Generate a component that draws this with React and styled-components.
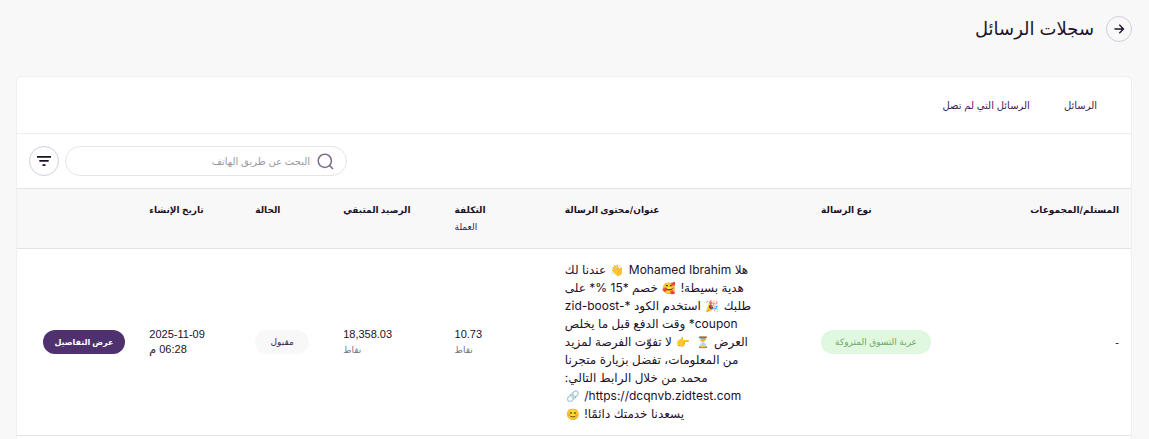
import React from 'react';
import styled, { createGlobalStyle } from 'styled-components';

const GlobalStyle = createGlobalStyle`
  * {
    box-sizing: border-box;
  }

  body {
    margin: 0;
    background: #f8f8f8;
    color: #1d1128;
    font-family: Inter, 'DejaVu Sans', sans-serif;
    font-size: 12px;
  }

  button,
  input {
    font-family: inherit;
  }
`;

const Page = styled.div`
  display: flex;
  flex-direction: column;
  min-height: 100vh;
  padding: 16px 17px 0 16px;
`;

const PageHeader = styled.header`
  display: flex;
  align-items: center;
  gap: 12px;
  height: 26px;
  margin-bottom: 34px;
`;

const Title = styled.h1`
  margin: 0;
  font-size: 18px;
  font-weight: 400;
  line-height: 22px;
`;

const RoundButton = styled.button`
  display: flex;
  align-items: center;
  justify-content: center;
  flex-shrink: 0;
  width: ${props => props.$size}px;
  height: ${props => props.$size}px;
  padding: 0;
  color: #1d1128;
  background: none;
  border: 1px solid #d3cedb;
  border-radius: 50%;
  cursor: pointer;
`;

const Card = styled.main`
  flex: 1;
  background: #fff;
  border: 1px solid #efeff0;
  border-bottom: 0;
  border-radius: 6px 6px 0 0;
`;

const Tabs = styled.nav`
  display: flex;
  align-items: center;
  gap: 34px;
  height: 57px;
  padding: 0 34px;
  border-bottom: 1px solid #efeff0;
`;

const Tab = styled.a`
  color: #3c1c54;
  font-size: 10px;
  line-height: 18px;
  text-decoration: none;
`;

const Toolbar = styled.div`
  display: flex;
  justify-content: flex-end;
  gap: 6px;
  padding: 12px;
`;

const SearchBox = styled.label`
  display: flex;
  align-items: center;
  gap: 7px;
  width: 282px;
  height: 30px;
  padding: 0 12px;
  color: #7d6c8d;
  border: 1px solid #e6e4ea;
  border-radius: 15px;
`;

const SearchInput = styled.input`
  flex: 1;
  min-width: 0;
  padding: 0;
  color: #1d1128;
  font-size: 10px;
  background: none;
  border: 0;
  outline: 0;

  &::placeholder {
    color: #9b9b9f;
    opacity: 1;
  }
`;

const Table = styled.table`
  width: 100%;
  table-layout: fixed;
  border-collapse: separate;
  border-spacing: 0;
`;

const Col = styled.col`
  width: ${props => props.$width};
`;

const HeadCell = styled.th`
  height: 61px;
  padding: 12px;
  font-size: 9px;
  font-weight: 600;
  line-height: 18px;
  text-align: ${props => props.$align || 'left'};
  vertical-align: top;
  white-space: nowrap;
  background: #f8f8f8;
  border-top: 1px solid #e3e3e5;
  border-bottom: 1px solid #e3e3e5;
`;

const Cell = styled.td`
  padding: 12px;
  line-height: 15px;
  text-align: ${props => props.$align || 'left'};
  vertical-align: middle;
  border-bottom: 1px solid #e3e3e5;
`;

const Figure = styled.div`
  font-family: 'Liberation Sans', 'DejaVu Sans', sans-serif;
  font-size: 11px;
  line-height: 15px;
`;

const SubText = styled.div`
  color: ${props => props.$color};
  font-size: 9px;
  font-weight: 400;
  line-height: 16px;
`;

const Message = styled.p`
  margin: 0;
  line-height: 18px;
  white-space: nowrap;
`;

const MessageLine = styled.span`
  display: block;
`;

const Emoji = styled.span`
  margin: 0 1px;
  font-size: 11px;
  line-height: 1;
  opacity: ${props => (props.$faded ? 0.6 : 1)};
`;

const Pill = styled.span`
  display: inline-block;
  min-width: 54px;
  padding: 0 14px;
  color: ${props => (props.$success ? '#6fa86f' : '#3c1c54')};
  font-size: 9px;
  line-height: 24px;
  text-align: center;
  vertical-align: middle;
  white-space: nowrap;
  background: ${props => (props.$success ? '#dff8df' : '#f8f8f8')};
  border-radius: 12px;
`;

const DetailsButton = styled.button`
  display: block;
  width: 82px;
  height: 24px;
  margin-right: auto;
  margin-left: 14px;
  padding: 0;
  color: #fff;
  font-size: 8px;
  font-weight: 600;
  white-space: nowrap;
  background: #4f3170;
  border: 0;
  border-radius: 12px;
  cursor: pointer;
`;

const ArrowIcon = () => (
  <svg width="12" height="12" viewBox="0 0 12 12" fill="none" stroke="currentColor" strokeWidth="1.3">
    <path d="M1.5 6h9M6.3 1.8 10.5 6l-4.2 4.2" />
  </svg>
);

const SearchIcon = () => (
  <svg width="17" height="17" viewBox="0 0 17 17" fill="none" stroke="currentColor" strokeWidth="1.5">
    <circle cx="7.8" cy="7.8" r="6.6" />
    <path d="m12.4 12.4 3.6 3.6" />
  </svg>
);

const FilterIcon = () => (
  <svg width="14" height="10" viewBox="0 0 14 10" fill="currentColor">
    <path d="M0 0h14v1.7H0zM2.3 4.1h9.4v1.7H2.3zM5.5 8.2h3v1.7h-3z" />
  </svg>
);

const messageLines = [
  <>هلا Mohamed Ibrahim <Emoji>👋</Emoji> عندنا لك</>,
  <>هدية بسيطة! <Emoji>🥰</Emoji> خصم *15 %* على</>,
  <>طلبك <Emoji>🎉</Emoji> استخدم الكود *<bdi dir="ltr">zid-boost-</bdi></>,
  'coupon* وقت الدفع قبل ما يخلص',
  <>العرض <Emoji>⏳</Emoji> <Emoji>👉</Emoji> لا تفوّت الفرصة لمزيد</>,
  'من المعلومات، تفضل بزيارة متجرنا',
  'محمد من خلال الرابط التالي:',
  <>https://dcqnvb.zidtest.com/ <Emoji $faded>{'🔗\uFE0F'}</Emoji></>,
  <>يسعدنا خدمتك دائمًا! <Emoji>{'😊\uFE0F'}</Emoji></>,
];

const columns = [
  { title: 'المستلم/المجموعات', align: 'right', width: '16%' },
  { title: 'نوع الرسالة', width: '12.9%' },
  { title: 'عنوان/محتوى الرسالة', width: '23%' },
  { title: 'التكلفة', sub: 'العملة', width: '9.9%' },
  { title: 'الرصيد المتبقي', width: '10%' },
  { title: 'الحالة', width: '7.9%' },
  { title: 'تاريخ الإنشاء', width: '9.5%' },
  { title: '', width: '10.8%' },
];

export default function App() {
  return (
    <Page dir="rtl" lang="ar">
      <GlobalStyle />
      <PageHeader>
        <RoundButton $size={26} aria-label="رجوع">
          <ArrowIcon />
        </RoundButton>
        <Title>سجلات الرسائل</Title>
      </PageHeader>
      <Card>
        <Tabs>
          <Tab href="#messages">الرسائل</Tab>
          <Tab href="#undelivered">الرسائل التي لم تصل</Tab>
        </Tabs>
        <Toolbar>
          <SearchBox>
            <SearchIcon />
            <SearchInput type="text" placeholder="البحث عن طريق الهاتف" />
          </SearchBox>
          <RoundButton $size={30} aria-label="تصفية">
            <FilterIcon />
          </RoundButton>
        </Toolbar>
        <Table>
          <colgroup>
            {columns.map((column, index) => (
              <Col key={index} $width={column.width} />
            ))}
          </colgroup>
          <thead>
            <tr>
              {columns.map((column, index) => (
                <HeadCell key={index} $align={column.align}>
                  {column.title}
                  {column.sub && <SubText $color="#3c1c54">{column.sub}</SubText>}
                </HeadCell>
              ))}
            </tr>
          </thead>
          <tbody>
            <tr>
              <Cell $align="right">
                <Figure>-</Figure>
              </Cell>
              <Cell>
                <Pill $success>عربة التسوق المتروكة</Pill>
              </Cell>
              <Cell>
                <Message>
                  {messageLines.map((line, index) => (
                    <MessageLine key={index}>{line}</MessageLine>
                  ))}
                </Message>
              </Cell>
              <Cell>
                <Figure>10.73</Figure>
                <SubText $color="#77717d">نقاط</SubText>
              </Cell>
              <Cell>
                <Figure>18,358.03</Figure>
                <SubText $color="#77717d">نقاط</SubText>
              </Cell>
              <Cell>
                <Pill>مقبول</Pill>
              </Cell>
              <Cell>
                <Figure>2025-11-09</Figure>
                <Figure>06:28 م</Figure>
              </Cell>
              <Cell>
                <DetailsButton>عرض التفاصيل</DetailsButton>
              </Cell>
            </tr>
          </tbody>
        </Table>
      </Card>
    </Page>
  );
}
